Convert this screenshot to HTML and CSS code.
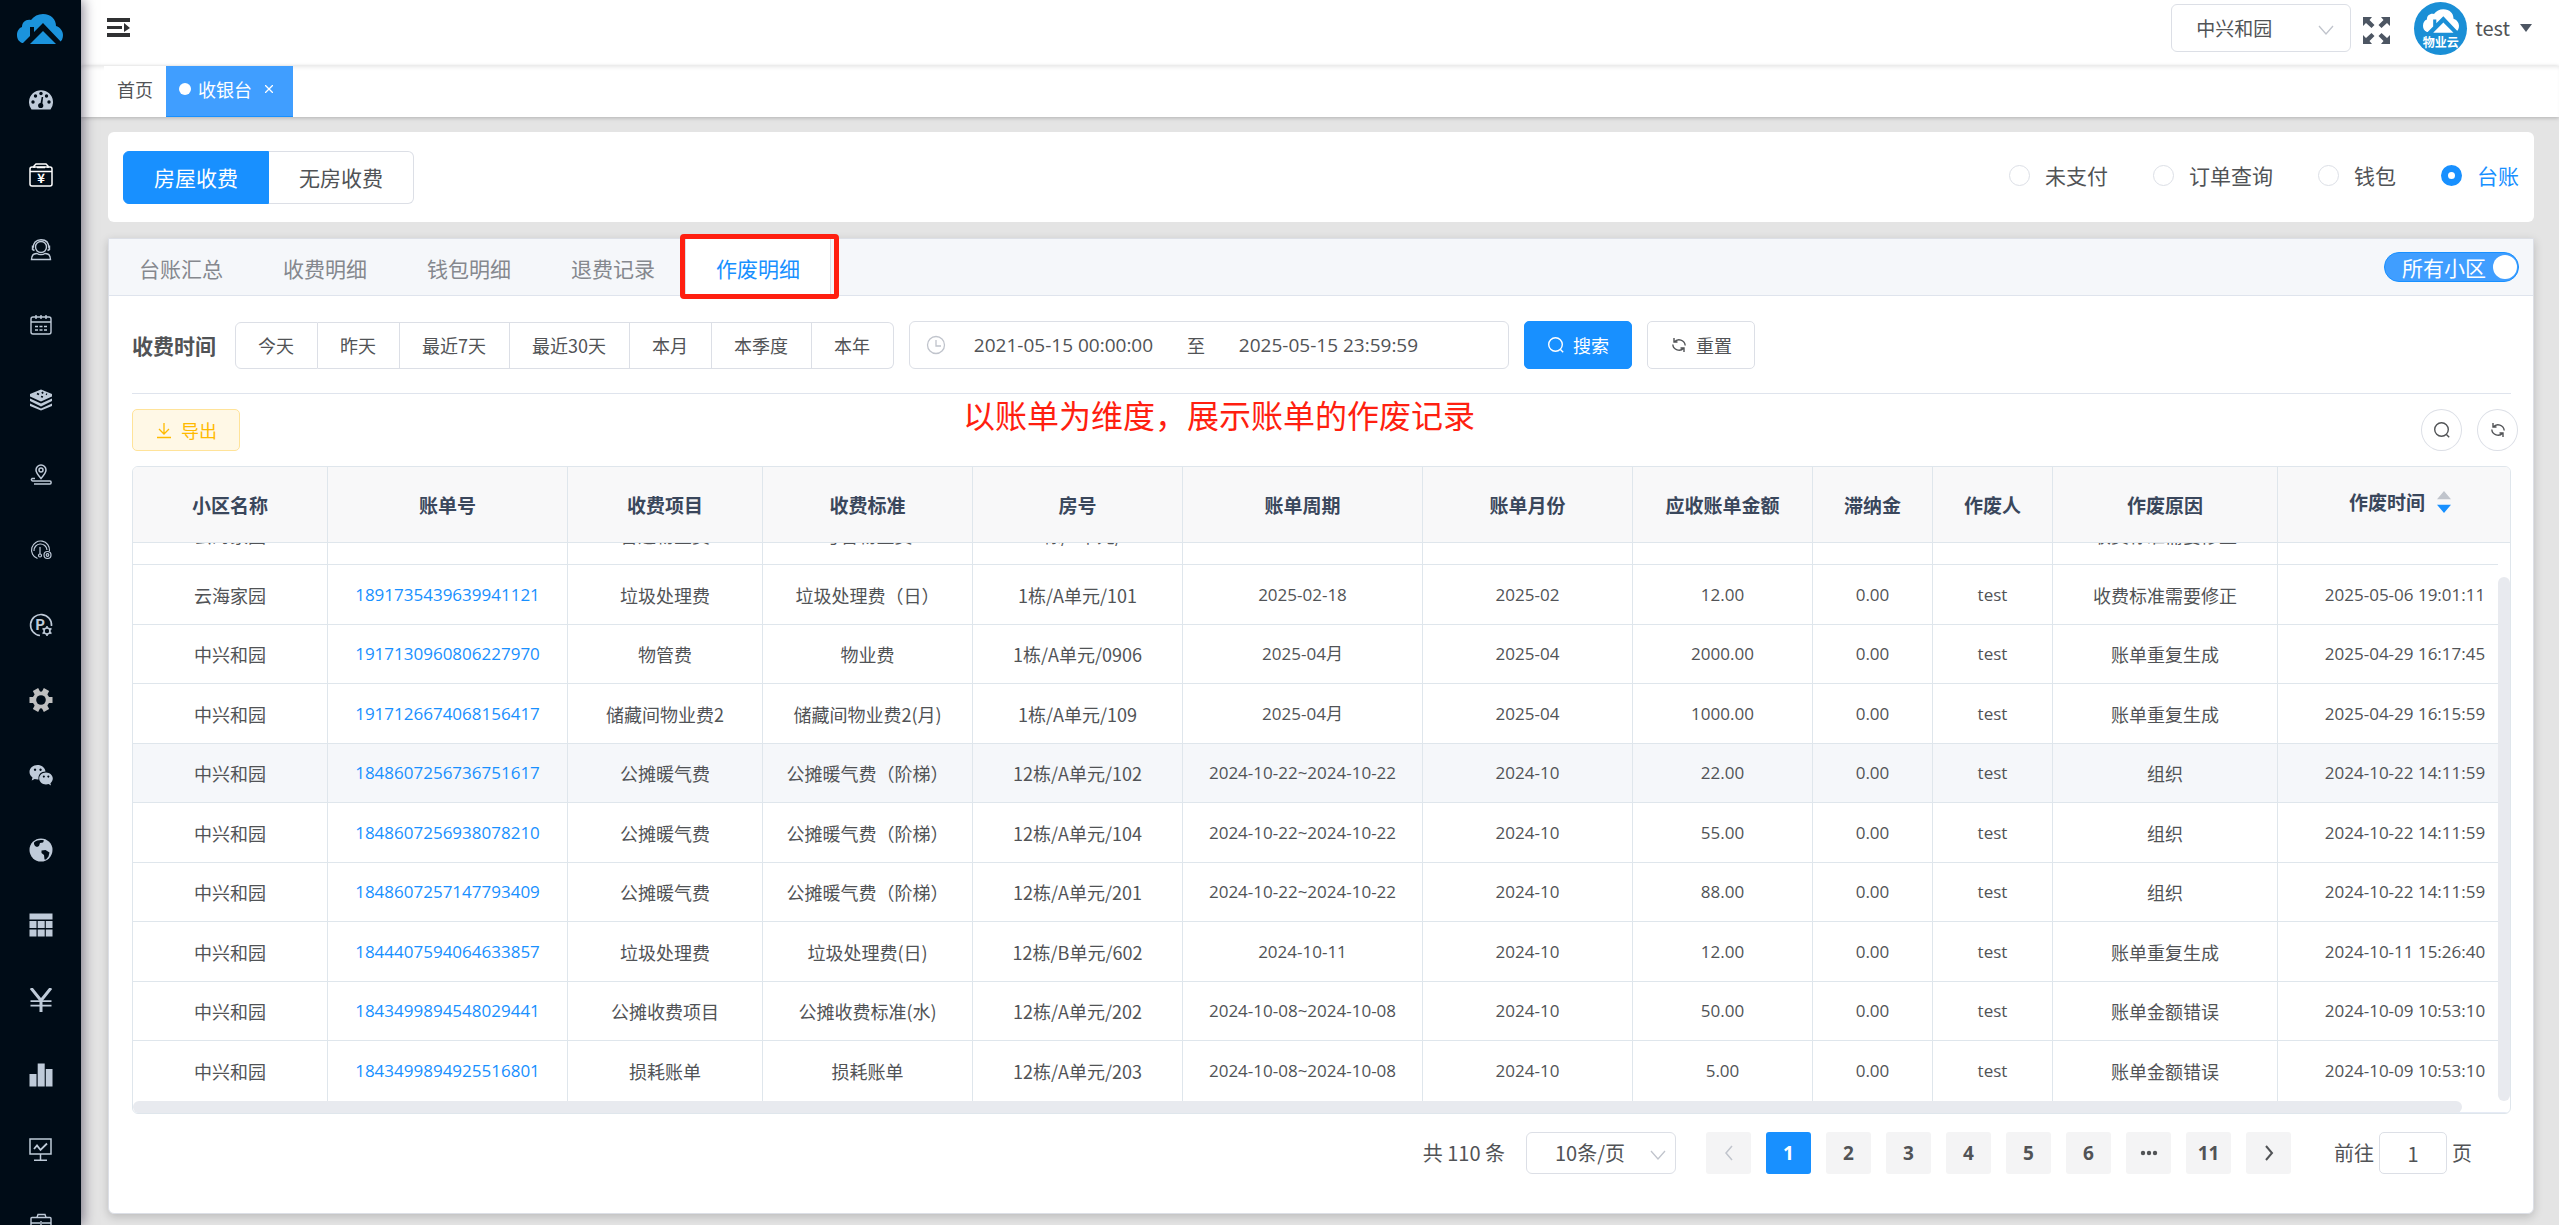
FILE: index.html
```html
<!DOCTYPE html>
<html lang="zh-CN">
<head>
  <meta charset="utf-8">
  <title>收银台</title>
  <link rel="stylesheet" href="styles.css">
</head>
<body>
  <!-- shared icons -->
  <svg class="sprite" aria-hidden="true">
    <symbol id="i-down" viewBox="0 0 16 16"><path d="M1 4l7 8 7-8" fill="none" stroke="currentColor" stroke-width="1.3"/></symbol>
    <symbol id="i-search" viewBox="0 0 18 18"><circle cx="8.5" cy="8.5" r="6.8" fill="none" stroke="currentColor" stroke-width="1.4"/><path d="M13.4 13.4l2.8 2.8" stroke="currentColor" stroke-width="1.4"/></symbol>
    <symbol id="i-refresh" viewBox="0 0 18 18"><path d="M4 2v4h3.500M4.300 6A6.200 6.200 0 0 1 15.200 9.500M14 16v-4h-3.500M13.700 12A6.200 6.200 0 0 1 2.800 8.500" fill="none" stroke="currentColor" stroke-width="1.4"/></symbol>
    <symbol id="i-cloud" viewBox="0 0 46 30"><path d="M5 29C1 27 0 24 0 21c0-4 2-7 5-8 0-5 4-8 9-7 3-4 7-6 12-6 8 0 13 5 13 12 4 1 7 5 7 9 0 3-1 6-4 8z"/><path class="cut" d="M5 30L13 22V13h4v5l9-9 20 21z"/><path d="M26 17l13 13H13z"/></symbol>
  </svg>

  <div class="app">
    <aside class="sidebar">
      <a class="logo" href="#" aria-label="首页"><svg width="46" height="30"><use href="#i-cloud"/></svg></a>
      <nav class="menu">
        <a href="#"><svg viewBox="0 0 24 24"><path fill="currentColor" d="M2.500 21.500A12 12 0 1 1 21.500 21.500z"/><g fill="#000c17"><circle cx="12" cy="5.500" r="1.700"/><circle cx="6.500" cy="8" r="1.700"/><circle cx="17.500" cy="8" r="1.700"/><circle cx="4" cy="14" r="1.700"/><circle cx="20" cy="14" r="1.700"/><circle cx="11.700" cy="17.500" r="2.600"/><path d="M12.700 9h1.500l-1 8h-2z"/></g></svg></a>
        <a href="#" class="on"><svg viewBox="0 0 24 24"><g fill="none" stroke="currentColor" stroke-width="1.500"><rect x="1" y="4" width="22" height="19" rx="2"/><path d="M1 8.500h22M5 5V3l2-2h10l2 2v2M8 4.500h8"/></g><text x="12" y="20" text-anchor="middle" font-size="13" font-weight="700" fill="currentColor">¥</text></svg></a>
        <a href="#"><svg viewBox="0 0 24 24"><g fill="none" stroke="currentColor" stroke-width="1.400"><circle cx="12" cy="9" r="5.500"/><path d="M4 10.500C4 5 7 1.800 12 1.800S20 5 20 10.500M3.500 7.500v4l2 1M20.500 7.500v4l-2 1M2.500 21.500c0-4 2-6 5.500-6 2 1.500 6 1.500 8 0 3.500 0 5.500 2 5.500 6z"/></g></svg></a>
        <a href="#"><svg viewBox="0 0 24 24"><g fill="none" stroke="currentColor" stroke-width="1.400"><rect x="2" y="4" width="20" height="17" rx="2"/><path d="M2 9h20M7 2v4M12 2v4M17 2v4"/><path d="M6 13.500h12M6 17h12" stroke-dasharray="3 1.500"/></g></svg></a>
        <a href="#"><svg viewBox="0 0 24 24"><g fill="currentColor"><path d="M12 1.500L1 6v2.500l11 5 11-5V6z"/><path d="M1 10.500l11 5 11-5V13l-11 5.500L1 13zM1 15.500l11 5 11-5V18l-11 4.500L1 18z"/></g><path d="M8 5.500l2 1M13 4l1 1.500M12 8.500l2 .5M17 6l1 .5" stroke="#000c17" stroke-width="1.800"/></svg></a>
        <a href="#"><svg viewBox="0 0 24 24"><g fill="none" stroke="currentColor" stroke-width="1.500"><path d="M12 15.500C8.500 11.500 7 9.500 7 7a5 5 0 0 1 10 0c0 2.500-1.500 4.500-5 8.500z"/><circle cx="12" cy="7" r="2"/><path d="M6 15.500H3c-1.500 1 0 2.500 1 2.500h17c1.500 0 1.500 3 0 3H5"/></g></svg></a>
        <a href="#"><svg viewBox="0 0 24 24"><g fill="none" stroke="currentColor" stroke-width="1.200"><path d="M8.500 20.500A9 9 0 1 1 20.500 13M5 13a6.500 6.500 0 1 1 13-1M11 9v7"/><circle cx="11" cy="17.500" r="1.500"/><circle cx="18.500" cy="17" r="3.500"/><circle cx="18.500" cy="17" r="1.300"/></g></svg></a>
        <a href="#"><svg viewBox="0 0 24 24"><g fill="none" stroke="currentColor" stroke-width="1.600"><path d="M11 22.500A10.500 10.500 0 1 1 22.500 13"/><circle cx="18" cy="18" r="3"/><path d="M18 13v2M18 21v2M13.500 15.500l2 1M20.500 19.500l2 1M13.500 20.500l2-1M20.500 16.500l2-1"/></g><text x="11" y="17" text-anchor="middle" font-size="15" font-weight="700" fill="currentColor">P</text></svg></a>
        <a href="#" class="gear"><svg viewBox="0 0 24 24"><circle cx="12" cy="12" r="8.500" fill="currentColor"/><path stroke="currentColor" stroke-width="6" d="M.5 12h23M6.500 1.500l11 21M17.500 1.500l-11 21"/><circle cx="12" cy="12" r="4.800" fill="#000c17"/></svg></a>
        <a href="#"><svg viewBox="0 0 24 24"><path fill="currentColor" fill-rule="evenodd" d="M8.500 2C4 2 .5 5 .5 9c0 2.300 1 4 3 5.500l-.8 3 3-1.500c1.200.4 2.500.5 3.800.4C9 11.500 12 8.500 16.500 8.500 16 4.500 12.500 2 8.500 2zM6 5.500a1.200 1.200 0 1 0 .1 0zM11.500 5.500a1.200 1.200 0 1 0 .1 0z"/><path fill="currentColor" fill-rule="evenodd" d="M17 9.500c-4 0-6.800 2.800-6.800 6s3 6 6.800 6c1 0 1.800-.2 2.600-.4l2.400 1.300-.6-2.200c1.500-1.200 2.400-2.800 2.400-4.700 0-3.200-3-6-6.800-6zM14.800 12.500a1 1 0 1 0 .1 0zM19.300 12.500a1 1 0 1 0 .1 0z"/></svg></a>
        <a href="#"><svg viewBox="0 0 24 24"><circle cx="12" cy="12" r="11.500" fill="currentColor"/><path fill="#000c17" d="M5 4.500C8 2 12 1.500 15 2.500l-1 2-3 .5-1 3-2 1-2-1-1-2zM12.500 12.500l4-.5 4 2.500-1 4-2.500 3h-1.500l-.5-4.500-2.500-2z"/></svg></a>
        <a href="#"><svg viewBox="0 0 24 24"><path fill="currentColor" d="M.5.5h23v6H.5zM.5 8h7v7h-7zM8.700 8h7v7h-7zM16.800 8h6.700v7h-6.700zM.5 16.500h7v7h-7zM8.700 16.500h7v7h-7zM16.800 16.500h6.700v7h-6.700z"/></svg></a>
        <a href="#"><svg viewBox="0 0 24 24"><path fill="none" stroke="currentColor" stroke-width="3" d="M2 0l10 12.500L22 0M12 12v12"/><path stroke="currentColor" stroke-width="1.800" d="M1.500 13.200h21M1.500 17.700h21"/></svg></a>
        <a href="#"><svg viewBox="0 0 24 24"><path fill="currentColor" d="M.5 11h7v12.500h-7zM8.700.5h7v23h-7zM16.800 6h6.700v17.500h-6.700z"/></svg></a>
        <a href="#"><svg viewBox="0 0 24 24"><g fill="none" stroke="currentColor" stroke-width="1.500"><path d="M1 1h21v15H1zM11.500 16v6M5 22.300h13"/><path d="M5 11l3-3.500 3.500 4.500L18 5.500" stroke-width="1.800"/></g></svg></a>
        <a href="#"><svg viewBox="0 0 24 24"><g fill="none" stroke="currentColor" stroke-width="1.400"><rect x="2" y="4.500" width="20" height="16" rx="1"/><path d="M8 4.500l1-3h7l1 3M2 10h9M13 10h9M12 8v4"/></g></svg></a>
      </nav>
    </aside>

    <div class="main">
      <header class="navbar">
        <button class="fold" aria-label="折叠菜单"><svg width="23" height="20"><path fill="#303133" d="M0 0h23v4H0zM0 8h15v3H0zM0 15h23v4H0zM17 5l6 5-6 4z"/></svg></button>
        <div class="nav-right">
          <div class="select community">
            <select aria-label="小区"><option>中兴和园</option></select>
            <svg width="16" height="16"><use href="#i-down"/></svg>
          </div>
          <button class="full" aria-label="全屏"><svg width="27" height="27"><path fill="#4d5663" d="M0 0h9L6.500 3l5 5-3 3-5.500-5L0 9zM27 0v9l-3-3-5.500 5-3-3 5-5L18 0zM0 27v-9l3 3 5.500-5 3 3-5 5 2.500 3zM27 27h-9l2.500-3-5-5 3-3 5.500 5 3-3z"/></svg></button>
          <a class="user" href="#">
            <span class="avatar"><svg width="36" height="24"><use href="#i-cloud"/></svg><b>物业云</b></span>
            <span>test</span>
            <i class="caret"></i>
          </a>
        </div>
      </header>

      <nav class="tags">
        <a href="#">首页</a>
        <a href="#" class="active"><i></i>收银台<svg width="8" height="8"><path d="M0 0l8 8M8 0L0 8" stroke="currentColor" stroke-width="1.300"/></svg></a>
      </nav>

      <section class="card mode">
        <div class="group big">
          <button class="active">房屋收费</button><button>无房收费</button>
        </div>
        <div class="radios">
          <label><input type="radio" name="view">未支付</label>
          <label><input type="radio" name="view">订单查询</label>
          <label><input type="radio" name="view">钱包</label>
          <label><input type="radio" name="view" checked>台账</label>
        </div>
      </section>

      <section class="panel">
        <div class="tabs">
          <a href="#">台账汇总</a>
          <a href="#">收费明细</a>
          <a href="#">钱包明细</a>
          <a href="#">退费记录</a>
          <a href="#" class="active">作废明细<i class="mark"></i></a>
          <label class="switch"><input type="checkbox" checked><span>所有小区</span></label>
        </div>

        <div class="panel-body">
          <form class="filter">
            <label for="start">收费时间</label>
            <div class="group">
              <button type="button">今天</button><button type="button">昨天</button><button type="button">最近7天</button><button type="button">最近30天</button><button type="button">本月</button><button type="button">本季度</button><button type="button">本年</button>
            </div>
            <div class="range">
              <svg width="20" height="20"><g fill="none" stroke="#c0c4cc" stroke-width="1.300"><circle cx="10" cy="10" r="8.500"/><path d="M10 5v6h5"/></g></svg>
              <input id="start" type="text" value="2021-05-15 00:00:00">
              <span>至</span>
              <input type="text" value="2025-05-15 23:59:59" aria-label="结束时间">
            </div>
            <button type="button" class="btn primary"><svg width="18" height="18"><use href="#i-search"/></svg>搜索</button>
            <button type="button" class="btn"><svg width="18" height="18"><use href="#i-refresh"/></svg>重置</button>
          </form>

          <div class="toolbar">
            <button class="btn export"><svg width="18" height="18"><path d="M9 2v11M4 8l5 5 5-5M2 16.500h14" fill="none" stroke="currentColor" stroke-width="1.300"/></svg>导出</button>
            <p class="note">以账单为维度，展示账单的作废记录</p>
            <div class="tools">
              <button aria-label="搜索"><svg width="18" height="18"><use href="#i-search"/></svg></button>
              <button aria-label="刷新"><svg width="18" height="18"><use href="#i-refresh"/></svg></button>
            </div>
          </div>

          <div class="table">
            <div class="viewport">
              <table>
                <colgroup><col class="w195"><col class="w240"><col class="w195"><col class="w210"><col class="w210"><col class="w240"><col class="w210"><col class="w180"><col class="w120"><col class="w120"><col class="w225"><col class="w255"></colgroup>
                <thead>
                  <tr><th>小区名称</th><th>账单号</th><th>收费项目</th><th>收费标准</th><th>房号</th><th>账单周期</th><th>账单月份</th><th>应收账单金额</th><th>滞纳金</th><th>作废人</th><th>作废原因</th><th><span class="sort">作废时间<i></i></span></th></tr>
                </thead>
              </table>
            </div>
            <div class="viewport rows">
              <table>
                <colgroup><col class="w195"><col class="w240"><col class="w195"><col class="w210"><col class="w210"><col class="w240"><col class="w210"><col class="w180"><col class="w120"><col class="w120"><col class="w225"><col class="w255"></colgroup>
                <tbody>
                  <tr><td>云海家园</td><td></td><td>普通物业费</td><td>号普物业费</td><td>1栋/A单元/</td><td></td><td></td><td></td><td></td><td></td><td>收费标准需要修正</td><td></td></tr>
                  <tr><td>云海家园</td><td><a href="#">1891735439639941121</a></td><td>垃圾处理费</td><td>垃圾处理费（日）</td><td>1栋/A单元/101</td><td>2025-02-18</td><td>2025-02</td><td>12.00</td><td>0.00</td><td>test</td><td>收费标准需要修正</td><td>2025-05-06 19:01:11</td></tr>
                  <tr><td>中兴和园</td><td><a href="#">1917130960806227970</a></td><td>物管费</td><td>物业费</td><td>1栋/A单元/0906</td><td>2025-04月</td><td>2025-04</td><td>2000.00</td><td>0.00</td><td>test</td><td>账单重复生成</td><td>2025-04-29 16:17:45</td></tr>
                  <tr><td>中兴和园</td><td><a href="#">1917126674068156417</a></td><td>储藏间物业费2</td><td>储藏间物业费2(月)</td><td>1栋/A单元/109</td><td>2025-04月</td><td>2025-04</td><td>1000.00</td><td>0.00</td><td>test</td><td>账单重复生成</td><td>2025-04-29 16:15:59</td></tr>
                  <tr class="hover"><td>中兴和园</td><td><a href="#">1848607256736751617</a></td><td>公摊暖气费</td><td>公摊暖气费（阶梯）</td><td>12栋/A单元/102</td><td>2024-10-22~2024-10-22</td><td>2024-10</td><td>22.00</td><td>0.00</td><td>test</td><td>组织</td><td>2024-10-22 14:11:59</td></tr>
                  <tr><td>中兴和园</td><td><a href="#">1848607256938078210</a></td><td>公摊暖气费</td><td>公摊暖气费（阶梯）</td><td>12栋/A单元/104</td><td>2024-10-22~2024-10-22</td><td>2024-10</td><td>55.00</td><td>0.00</td><td>test</td><td>组织</td><td>2024-10-22 14:11:59</td></tr>
                  <tr><td>中兴和园</td><td><a href="#">1848607257147793409</a></td><td>公摊暖气费</td><td>公摊暖气费（阶梯）</td><td>12栋/A单元/201</td><td>2024-10-22~2024-10-22</td><td>2024-10</td><td>88.00</td><td>0.00</td><td>test</td><td>组织</td><td>2024-10-22 14:11:59</td></tr>
                  <tr><td>中兴和园</td><td><a href="#">1844407594064633857</a></td><td>垃圾处理费</td><td>垃圾处理费(日)</td><td>12栋/B单元/602</td><td>2024-10-11</td><td>2024-10</td><td>12.00</td><td>0.00</td><td>test</td><td>账单重复生成</td><td>2024-10-11 15:26:40</td></tr>
                  <tr><td>中兴和园</td><td><a href="#">1843499894548029441</a></td><td>公摊收费项目</td><td>公摊收费标准(水)</td><td>12栋/A单元/202</td><td>2024-10-08~2024-10-08</td><td>2024-10</td><td>50.00</td><td>0.00</td><td>test</td><td>账单金额错误</td><td>2024-10-09 10:53:10</td></tr>
                  <tr><td>中兴和园</td><td><a href="#">1843499894925516801</a></td><td>损耗账单</td><td>损耗账单</td><td>12栋/A单元/203</td><td>2024-10-08~2024-10-08</td><td>2024-10</td><td>5.00</td><td>0.00</td><td>test</td><td>账单金额错误</td><td>2024-10-09 10:53:10</td></tr>
                </tbody>
              </table>
              <i class="bar-y"></i>
            </div>
            <div class="track-x"><i class="bar-x"></i></div>
          </div>

          <div class="pager">
            <span class="total">共 110 条</span>
            <div class="select size">
              <select aria-label="每页条数"><option>10条/页</option></select>
              <svg width="16" height="16"><use href="#i-down"/></svg>
            </div>
            <div class="pages">
              <button aria-label="上一页" disabled><svg width="10" height="16"><path d="M8 1L2 8l6 7" fill="none" stroke="currentColor" stroke-width="1.500"/></svg></button>
              <button class="active">1</button>
              <button>2</button>
              <button>3</button>
              <button>4</button>
              <button>5</button>
              <button>6</button>
              <button aria-label="更多"><svg width="18" height="6"><g fill="currentColor"><circle cx="3" cy="3" r="2.200"/><circle cx="9" cy="3" r="2.200"/><circle cx="15" cy="3" r="2.200"/></g></svg></button>
              <button>11</button>
              <button aria-label="下一页"><svg width="10" height="16"><path d="M2 1l6 7-6 7" fill="none" stroke="currentColor" stroke-width="2"/></svg></button>
            </div>
            <label class="jump">前往<input type="text" value="1">页</label>
          </div>
        </div>
      </section>
    </div>
  </div>
</body>
</html>
```
FILE: styles.css
```css
* {
  box-sizing: border-box;
}

body {
  margin: 0;
  background: #e4e4e4;
  color: #515356;
  font: 18px/24px "Noto Sans CJK SC", sans-serif;
}

a {
  color: inherit;
  text-decoration: none;
}

button,
input,
select {
  font: inherit;
  color: inherit;
  margin: 0;
}

button {
  padding: 0;
  border: 0;
  background: none;
  cursor: pointer;
}

svg {
  display: block;
  flex: none;
}

.sprite {
  position: absolute;
  width: 0;
  height: 0;
}

.app {
  display: flex;
  height: 100vh;
  overflow: hidden;
}

/* sidebar */
.sidebar {
  flex: none;
  width: 81px;
  overflow: hidden;
  background: #000c17;
  color: #bfcbd9;
  box-shadow: 2px 0 12px rgba(20, 10, 40, 0.5);
  z-index: 2;
}

.logo {
  --cut: #000c17;
  display: flex;
  height: 62px;
  padding: 14px 17px;
  fill: #1b93dc;
}

.cut {
  fill: var(--cut);
}

.menu a {
  display: flex;
  align-items: center;
  justify-content: center;
  height: 75px;
}

.menu svg {
  width: 24px;
  height: 24px;
}

.menu .on {
  color: #fff;
}

.menu .gear {
  color: #bfbfbf;
}

/* header */
.main {
  flex: 1;
  min-width: 0;
}

.navbar {
  display: flex;
  align-items: center;
  justify-content: space-between;
  height: 66px;
  padding: 0 27px 10px 26px;
  background: #fff;
}

.nav-right,
.user {
  display: flex;
  align-items: center;
}

.select {
  position: relative;
}

.select select {
  width: 100%;
  height: 100%;
  border: 1px solid #dcdfe6;
  border-radius: 6px;
  background: #fff;
  appearance: none;
}

.select svg {
  position: absolute;
  right: 17px;
  top: 50%;
  margin-top: -6px;
  color: #c0c4cc;
  pointer-events: none;
}

.community {
  width: 180px;
  height: 48px;
}

.community select {
  padding: 0 24px;
  font-size: 19px;
}

.full {
  margin: 4px 24px 0 12px;
}

.user {
  gap: 8px;
  font-size: 20px;
}

.avatar {
  --cut: #1a8fd6;
  display: flex;
  flex-direction: column;
  align-items: center;
  width: 53px;
  height: 53px;
  padding-top: 7px;
  border-radius: 50%;
  background: #1a8fd6;
  fill: #fff;
}

.avatar b {
  color: #fff;
  font-size: 12px;
  line-height: 18px;
}

.caret {
  margin-left: 2px;
  border: 6px solid transparent;
  border-top: 8px solid #4d5663;
  border-bottom: 0;
}

.tags {
  display: flex;
  height: 51px;
  padding-left: 23px;
  background: #fff;
  box-shadow: inset 0 3px 4px -2px #e6e6e6, 0 1px 4px #b0b0b0;
}

.tags a {
  display: flex;
  align-items: center;
  padding: 0 13px 5px;
  background: #fff;
}

.tags .active {
  padding-right: 20px;
  border-bottom: 1px solid #1890ff;
  background: #409eff;
  color: #fff;
}

.tags i {
  width: 12px;
  height: 12px;
  margin-right: 7px;
  border-radius: 50%;
  background: #fff;
}

.tags svg {
  margin-left: 13px;
}

/* first card */
.card {
  margin: 15px 25px 16px 27px;
  border-radius: 6px;
  background: #fff;
}

.mode {
  display: flex;
  align-items: center;
  justify-content: space-between;
  height: 90px;
  padding: 0 15px;
  font-size: 21px;
}

.group {
  display: flex;
  height: 47px;
}

.group button {
  padding: 0 23px 0 22px;
  border: 1px solid #dcdfe6;
  border-left: 0;
  background: #fff;
}

.group button:first-child {
  border-left: 1px solid #dcdfe6;
  border-radius: 6px 0 0 6px;
}

.group button:last-child {
  border-radius: 0 6px 6px 0;
}

.big {
  height: 53px;
}

.big button {
  padding: 0 30px;
}

.big .active {
  border-color: #1890ff !important;
  background: #1890ff;
  color: #fff;
}

.radios {
  display: flex;
  gap: 45px;
  padding-bottom: 4px;
}

.radios label {
  display: flex;
  align-items: center;
  gap: 15px;
}

.radios input {
  width: 21px;
  height: 21px;
  border: 1px solid #dcdfe6;
  border-radius: 50%;
  background: #fff;
  appearance: none;
}

.radios input:checked {
  border: 7px solid #1890ff;
}

.radios label:last-child {
  color: #1890ff;
}

/* panel */
.panel {
  margin: 0 25px 12px 27px;
  border: 1px solid #dcdfe6;
  border-radius: 0 0 6px 6px;
  background: #fff;
  box-shadow: 0 3px 10px rgba(0, 0, 0, 0.18);
}

.tabs {
  display: flex;
  height: 57px;
  border-bottom: 1px solid #dfe4ed;
  background: #f5f7fa;
  color: #85888e;
  font-size: 21px;
  line-height: 58px;
}

.tabs a {
  position: relative;
  padding: 0 30px;
}

.tabs .active {
  border-left: 1px solid #dcdfe6;
  border-right: 1px solid #dcdfe6;
  background: #fff;
  color: #1890ff;
}

.mark {
  position: absolute;
  inset: -5px -9px -4px -6px;
  border: 5px solid #ff1f10;
  border-radius: 4px;
}

.switch {
  display: flex;
  align-items: center;
  width: 135px;
  height: 30px;
  margin: 13px 14px 0 auto;
  padding-left: 17px;
  border: 1px solid #1890ff;
  border-radius: 15px;
  background: #409eff;
  color: #fff;
}

.switch input {
  order: 1;
  width: 24px;
  height: 24px;
  margin-left: 7px;
  border-radius: 50%;
  background: #fff;
  appearance: none;
}

.panel-body {
  padding: 0 22px 39px 23px;
}

.filter {
  display: flex;
  align-items: center;
  gap: 15px;
  padding: 25px 0 24px;
  border-bottom: 1px solid #dfe4ed;
}

.filter > label {
  margin-right: 4px;
  font-size: 21px;
  font-weight: 700;
}

.range {
  display: flex;
  align-items: center;
  width: 600px;
  height: 48px;
  padding-left: 16px;
  border: 1px solid #dcdfe6;
  border-radius: 6px;
}

.range input {
  width: 235px;
  padding: 0;
  border: 0;
  background: none;
  font: 19px/24px "Open Sans", sans-serif;
  text-align: center;
}

.range span {
  width: 30px;
  text-align: center;
}

.btn {
  display: flex;
  align-items: center;
  gap: 8px;
  height: 48px;
  padding: 0 22px;
  border: 1px solid #dcdfe6;
  border-radius: 5px;
  background: #fff;
}

.primary {
  border-color: #1890ff;
  background: #1890ff;
  color: #fff;
}

.toolbar {
  position: relative;
  display: flex;
  justify-content: space-between;
  margin-right: -7px;
  padding: 15px 0;
}

.export {
  height: 42px;
  border-color: #ffe399;
  background: #fff8e6;
  color: #ffba00;
}

.note {
  position: absolute;
  top: 0;
  left: 35%;
  margin: 0 0 0 -4px;
  color: #ff1f10;
  font-size: 32px;
  line-height: 40px;
}

.tools {
  display: flex;
  gap: 15px;
}

.tools button {
  display: flex;
  align-items: center;
  justify-content: center;
  width: 41px;
  height: 42px;
  border: 1px solid #dcdfe6;
  border-radius: 50%;
}

/* table */
.table {
  overflow: hidden;
  border: 1px solid #dfe6ec;
  border-radius: 6px;
}

.viewport {
  overflow: hidden;
  background: #f8f8f9;
}

/* scrolled to the last row */
.rows {
  position: relative;
  display: flex;
  flex-direction: column;
  justify-content: flex-end;
  height: 558px;
  padding-right: 12px;
  background: #fff;
}

.rows table {
  flex: none;
}

.rows::after {
  content: "";
  position: absolute;
  top: 0;
  right: 0;
  bottom: 0;
  width: 12px;
  background: #fff;
}

table {
  width: 2400px;
  border-spacing: 0;
  table-layout: fixed;
}

.w120 { width: 120px; }
.w180 { width: 180px; }
.w195 { width: 195px; }
.w210 { width: 210px; }
.w225 { width: 225px; }
.w240 { width: 240px; }
.w255 { width: 255px; }

th,
td {
  padding: 0;
  border-right: 1px solid #dfe6ec;
  border-bottom: 1px solid #dfe6ec;
  text-align: center;
}

th {
  height: 76px;
  color: #3a475c;
  font-size: 19px;
}

td {
  height: 59px;
}

tr:nth-child(even) td {
  height: 60px;
}

tr:last-child td {
  border-bottom: 0;
}

th:last-child {
  border-bottom: 1px solid #dfe6ec;
}

td:nth-child(2),
td:nth-child(6),
td:nth-child(7),
td:nth-child(8),
td:nth-child(9),
td:nth-child(10),
td:nth-child(12) {
  font-family: "Open Sans", "Noto Sans CJK SC", sans-serif;
  font-size: 17px;
}

td a {
  color: #1890ff;
}

.hover td {
  background: #f5f7fa;
}

.sort {
  display: inline-flex;
  align-items: center;
  gap: 12px;
  padding: 0 10px 5px 0;
}

.sort i {
  width: 14px;
  height: 22px;
  background: linear-gradient(#1890ff, #1890ff) bottom / 100% 50%, linear-gradient(#c0c4cc, #c0c4cc) top / 100% 50%;
  background-repeat: no-repeat;
  clip-path: polygon(50% 0, 100% 38%, 0 38%, 0 62%, 100% 62%, 50% 100%, 0 62%, 0 38%);
}

.bar-y {
  position: absolute;
  top: 34px;
  right: 0;
  bottom: 0;
  z-index: 1;
  width: 12px;
  border-radius: 6px;
  background: #e8eaef;
}

.track-x {
  height: 12px;
  border-bottom: 1px solid #e6ebf5;
}

.bar-x {
  display: block;
  width: 98%;
  height: 12px;
  border-radius: 6px;
  background: #e8eaef;
}

/* pagination */
.pager {
  display: flex;
  align-items: center;
  justify-content: flex-end;
  padding: 18px 39px 0 0;
  font-size: 20px;
}

.size {
  width: 150px;
  height: 42px;
  margin: 0 30px 0 21px;
}

.size select {
  padding: 0 28px;
}

.size svg {
  right: 10px;
}

.pages {
  display: flex;
  gap: 15px;
}

.pages button {
  display: flex;
  align-items: center;
  justify-content: center;
  width: 45px;
  height: 42px;
  border-radius: 3px;
  background: #f4f4f5;
  font: 700 19px/42px "Open Sans", sans-serif;
}

.pages button:disabled {
  color: #c0c4cc;
}

.pages .active {
  background: #1890ff;
  color: #fff;
}

.jump {
  display: flex;
  align-items: center;
  gap: 5px;
  margin-left: 43px;
}

.jump input {
  width: 68px;
  height: 42px;
  border: 1px solid #dcdfe6;
  border-radius: 5px;
  text-align: center;
}
```
